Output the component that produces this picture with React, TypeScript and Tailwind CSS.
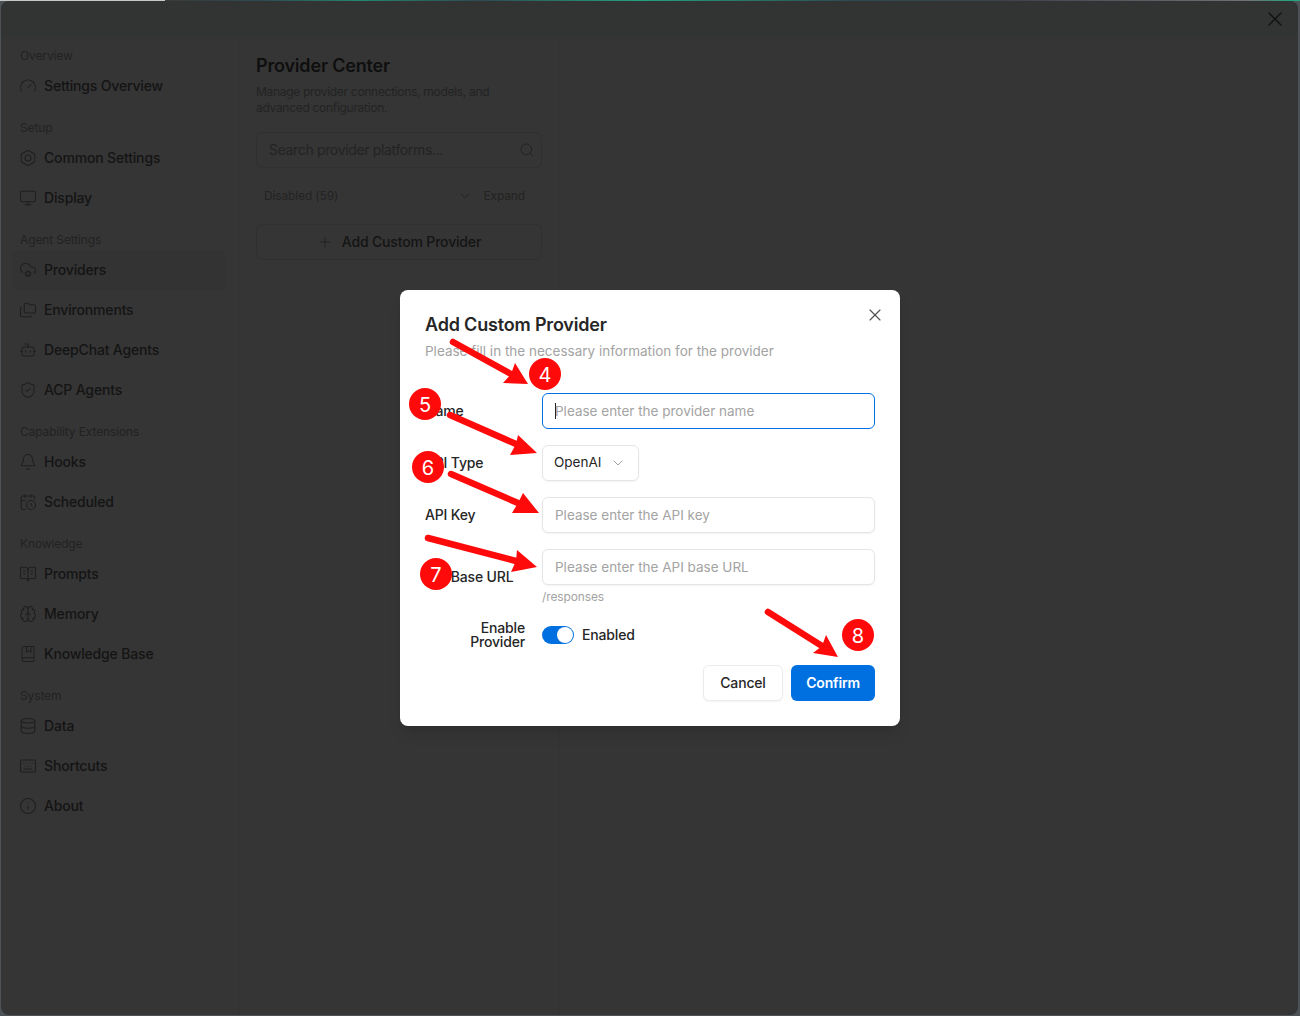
import {
  BookOpenText, Bot, Brain, BookMarked, CalendarClock, ChevronDown, Bell, Bolt, CloudCog, Database, Folders, Gauge,
  Info, Keyboard, Monitor, Plus, Search, ShieldCheck, X,
} from 'lucide-react';

const sections = [
  { title: 'Overview', items: [{ label: 'Settings Overview', icon: Gauge }] },
  {
    title: 'Setup',
    items: [
      { label: 'Common Settings', icon: Bolt },
      { label: 'Display', icon: Monitor },
    ],
  },
  {
    title: 'Agent Settings',
    items: [
      { label: 'Providers', icon: CloudCog, active: true },
      { label: 'Environments', icon: Folders },
      { label: 'DeepChat Agents', icon: Bot },
      { label: 'ACP Agents', icon: ShieldCheck },
    ],
  },
  {
    title: 'Capability Extensions',
    items: [
      { label: 'Hooks', icon: Bell },
      { label: 'Scheduled', icon: CalendarClock },
    ],
  },
  {
    title: 'Knowledge',
    items: [
      { label: 'Prompts', icon: BookOpenText },
      { label: 'Memory', icon: Brain },
      { label: 'Knowledge Base', icon: BookMarked },
    ],
  },
  {
    title: 'System',
    items: [
      { label: 'Data', icon: Database },
      { label: 'Shortcuts', icon: Keyboard },
      { label: 'About', icon: Info },
    ],
  },
];

const arrows = [
  { tail: [453, 342], tip: [528, 384], a: [515, 363], b: [503, 383], notch: [511, 374] },
  { tail: [450, 415], tip: [537, 453], a: [518, 435], b: [510, 455], notch: [516, 444] },
  { tail: [451, 474], tip: [539, 513], a: [523, 493], b: [512, 513], notch: [518, 503] },
  { tail: [428, 538], tip: [537, 567], a: [517, 550], b: [511, 572], notch: [516, 561] },
  { tail: [768, 612], tip: [838, 657], a: [826, 635], b: [813, 653], notch: [822, 646] },
];

const badges = [
  { n: 4, className: 'left-[529px] top-[358px]' },
  { n: 5, className: 'left-[409px] top-[388px]' },
  { n: 6, className: 'left-[412px] top-[451px]' },
  { n: 7, className: 'left-[420px] top-[558px]' },
  { n: 8, className: 'left-[842px] top-[619px]' },
];

const inputClass =
  'h-9 w-full rounded-md border border-[#e5e5e5] bg-white px-3 text-[13.5px] font-normal tracking-normal text-[#262626] shadow-[0_1px_2px_rgba(0,0,0,0.05)] outline-none placeholder:text-[#a3a3a3]';

const Sidebar = () => (
  <aside className="w-[239px] shrink-0 border-r border-[#333333] pl-[11px] pr-3 pt-[11px]">
    {sections.map((section) => (
      <div key={section.title} className="mb-[14px]">
        <div className="mb-[2px] h-4 px-2 text-xs leading-4 tracking-[-0.01em] text-[#222222]">{section.title}</div>
        {section.items.map((item) => (
          <div
            key={item.label}
            className={`flex h-10 w-[214px] items-center gap-[7px] rounded-lg pl-[7px] text-sm font-medium tracking-[-0.012em] text-[#141414] ${
              item.active ? 'bg-[#333333]' : ''
            }`}
          >
            <item.icon size={18} strokeWidth={1.4} className="shrink-0 text-[#1f1f1f]" />
            <span>{item.label}</span>
          </div>
        ))}
      </div>
    ))}
  </aside>
);

const ProviderPanel = () => (
  <section className="w-[320px] border-r border-[#333333] px-4 pt-[15px]">
    <h1 className="text-lg font-semibold leading-7 tracking-[-0.01em] text-[#0f0f0f]">Provider Center</h1>
    <p className="mt-1 w-[250px] text-xs leading-4 tracking-[-0.025em] text-[#232323]">
      Manage provider connections, models, and advanced configuration.
    </p>
    <div className="mt-4 flex h-9 w-[286px] items-center justify-between rounded-md border border-[#303030] pl-3 pr-[6px] text-sm tracking-[-0.025em] text-[#232323]">
      <span>Search provider platforms...</span>
      <Search size={16} strokeWidth={1.5} />
    </div>
    <div className="mt-[10px] flex h-9 w-[286px] items-center justify-between pl-2 pr-[17px] text-xs tracking-[-0.012em] text-[#232323]">
      <span>Disabled (59)</span>
      <span className="flex items-center gap-[10px]">
        <ChevronDown size={16} strokeWidth={1.5} />
        Expand
      </span>
    </div>
    <div className="mt-[10px] flex h-9 w-[286px] items-center justify-center gap-[9px] rounded-md border border-[#303030] text-sm font-medium tracking-[-0.012em] text-[#141414]">
      <Plus size={16} strokeWidth={1.5} className="text-[#232323]" />
      Add Custom Provider
    </div>
  </section>
);

const AddProviderDialog = () => (
  <div className="absolute inset-0 z-10 flex items-center justify-center">
    <div className="relative h-[436px] w-[500px] rounded-lg bg-white px-[25px] pt-[21px] font-['Inter',sans-serif] shadow-lg">
      <X size={20} strokeWidth={1.4} className="absolute right-[15px] top-[15px] text-[#525252]" />
      <h2 className="text-lg font-semibold leading-7 tracking-[-0.01em] text-[#262626]">Add Custom Provider</h2>
      <p className="mt-[2px] text-[13.5px] leading-5 text-[#a3a3a3]">
        Please fill in the necessary information for the provider
      </p>
      <div className="mt-[32px] grid grid-cols-[100px_1fr] items-center gap-x-[17px] gap-y-4 text-sm font-medium tracking-[-0.012em] text-[#262626]">
        <label>Name</label>
        <div className="relative">
          <input
            readOnly
            placeholder="Please enter the provider name"
            className="h-9 w-full rounded-md border border-[#0070e0] bg-white px-3 text-[13.5px] font-normal tracking-normal outline-none placeholder:text-[#a3a3a3]"
          />
          {/* text caret */}
          <span className="absolute left-[13px] top-[10px] h-4 w-px bg-[#262626]" />
        </div>
        <label>API Type</label>
        <div className="flex h-9 w-[97px] items-center justify-between rounded-md border border-[#e5e5e5] pl-[11px] pr-[12px] text-[13.5px] font-normal tracking-normal shadow-[0_1px_2px_rgba(0,0,0,0.05)]">
          OpenAI
          <ChevronDown size={16} strokeWidth={1.5} className="text-[#a3a3a3]" />
        </div>
        <label>API Key</label>
        <input readOnly placeholder="Please enter the API key" className={inputClass} />
        <label>API Base URL</label>
        <div>
          <input readOnly placeholder="Please enter the API base URL" className={inputClass} />
          <p className="mt-1 text-xs font-normal leading-4 tracking-[-0.01em] text-[#a3a3a3]">/responses</p>
        </div>
        <label className="text-right leading-[14px]">
          Enable
          <br />
          Provider
        </label>
        <div className="flex items-center gap-2">
          <span className="flex h-[18px] w-8 items-center justify-end rounded-full bg-[#0070e0] p-[1px]">
            <span className="h-4 w-4 rounded-full bg-white" />
          </span>
          Enabled
        </div>
      </div>
      <div className="mt-4 flex justify-end gap-2 text-sm font-medium tracking-[-0.012em]">
        <button className="h-9 w-20 rounded-md border border-[#ececec] bg-white text-[#262626] shadow-[0_1px_2px_rgba(0,0,0,0.05)]">
          Cancel
        </button>
        <button className="h-9 w-[84px] rounded-md bg-[#0070e0] font-semibold text-white">Confirm</button>
      </div>
    </div>
  </div>
);

const Annotations = () => (
  <>
    <svg className="pointer-events-none absolute left-0 top-0 z-20 h-[1016px] w-[1300px]" viewBox="0 0 1300 1016">
      {arrows.map((arrow) => (
        <g key={arrow.tail.join()} fill="#ff0a0a" stroke="none">
          <line
            x1={arrow.tail[0]}
            y1={arrow.tail[1]}
            x2={arrow.notch[0]}
            y2={arrow.notch[1]}
            stroke="#ff0a0a"
            strokeWidth={6.5}
            strokeLinecap="round"
          />
          <polygon points={[arrow.tip, arrow.a, arrow.notch, arrow.b].map((p) => p.join(',')).join(' ')} />
        </g>
      ))}
    </svg>
    {badges.map((badge) => (
      <div
        key={badge.n}
        className={`absolute z-30 flex h-8 w-8 items-center justify-center rounded-full bg-[#ff0a0a] pt-px font-['Inter',sans-serif] text-xl text-white ${badge.className}`}
      >
        {badge.n}
      </div>
    ))}
  </>
);

export default function App() {
  return (
    <div className="relative flex h-[1016px] w-[1300px] flex-col overflow-hidden bg-[#4d5256] font-['Inter',sans-serif]">
      {/* sliver of the desktop behind the window */}
      <div className="h-[1px] shrink-0 bg-[linear-gradient(90deg,#c8c8c8_0,#c8c8c8_165px,#3a3a3a_165px,#2c4a52_260px,#24866f_360px,#2c4a52_480px,#23a37f_640px,#2c4a52_850px,#3c4248_1000px,#6f7378_1250px,#26a37f_1290px)]" />
      <div className="mb-px ml-px mr-[2px] flex flex-1 flex-col overflow-hidden rounded-lg bg-[#353535]">
        <header className="flex h-[36px] shrink-0 items-center justify-end border-b border-[#343434] bg-[#323434] pr-[11px]">
          <X size={24} strokeWidth={1.4} className="text-[#111111]" />
        </header>
        <div className="flex flex-1">
          <Sidebar />
          <ProviderPanel />
        </div>
      </div>
      <AddProviderDialog />
      <Annotations />
    </div>
  );
}
